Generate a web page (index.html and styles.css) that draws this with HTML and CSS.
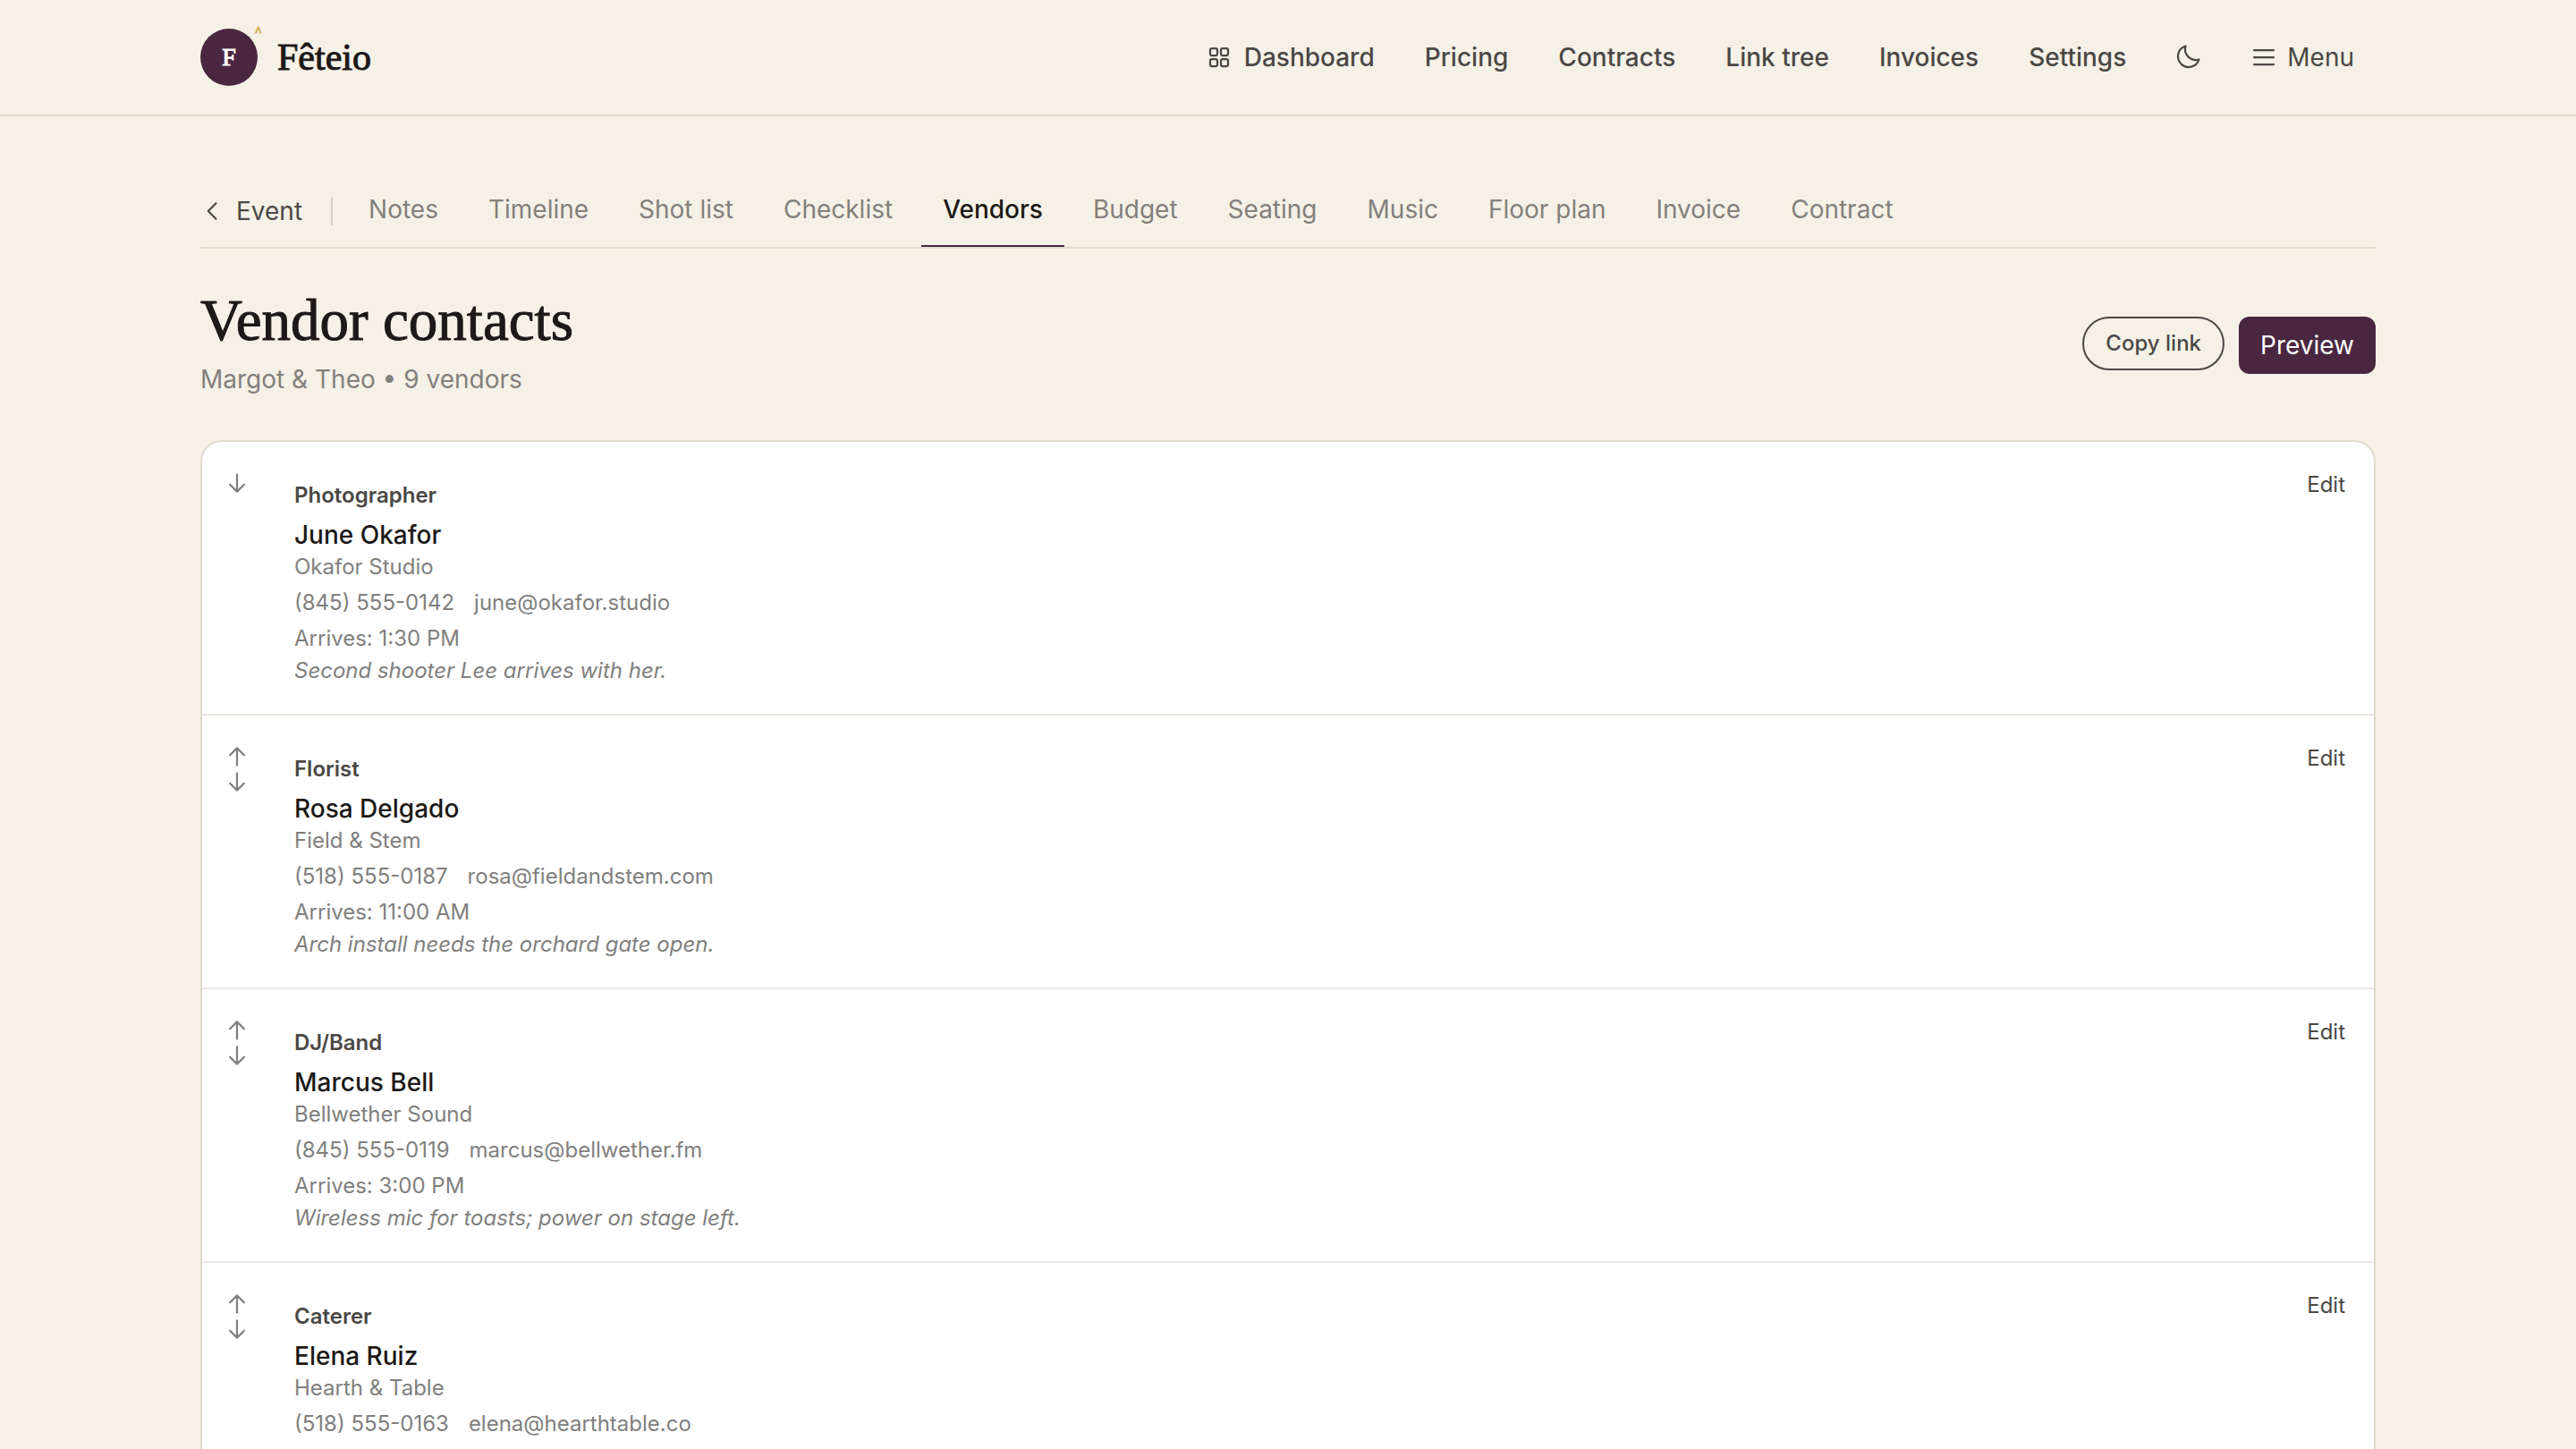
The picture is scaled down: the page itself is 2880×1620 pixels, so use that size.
FILE: index.html
```html
<!DOCTYPE html>
<html lang="en">
<head>
<meta charset="utf-8">
<meta name="viewport" content="width=device-width, initial-scale=1">
<title>Vendor contacts – Fêteio</title>
<link rel="stylesheet" href="styles.css">
</head>
<body>
<svg class="sprite" aria-hidden="true">
  <symbol id="grid" viewBox="0 0 256 256"><rect x="48" y="48" width="64" height="64" rx="16"/><rect x="144" y="48" width="64" height="64" rx="16"/><rect x="48" y="144" width="64" height="64" rx="16"/><rect x="144" y="144" width="64" height="64" rx="16"/></symbol>
  <symbol id="moon" viewBox="0 0 256 256"><path d="M108.11 28.11A96.09 96.09 0 0 0 227.89 147.89A96 96 0 1 1 108.11 28.11Z"/></symbol>
  <symbol id="list" viewBox="0 0 256 256"><path d="M40 64H216M40 128H216M40 192H216"/></symbol>
  <symbol id="caret" viewBox="0 0 256 256"><path d="M160 208L80 128L160 48"/></symbol>
  <symbol id="up" viewBox="0 0 256 256"><path d="M128 216V40M56 112L128 40L200 112"/></symbol>
  <symbol id="down" viewBox="0 0 256 256"><path d="M128 40V216M56 144L128 216L200 144"/></symbol>
</svg>

<header class="site-header">
  <div class="container site-bar">
    <a class="brand" href="#"><span class="mark">F<span class="mark-accent">^</span></span><span class="brand-name">Fêteio</span></a>
    <nav class="site-nav" aria-label="Main">
      <a href="#"><svg class="icon"><use href="#grid"/></svg>Dashboard</a>
      <a href="#">Pricing</a>
      <a href="#">Contracts</a>
      <a href="#">Link tree</a>
      <a href="#">Invoices</a>
      <a href="#">Settings</a>
      <button type="button" class="theme" aria-label="Dark mode"><svg class="icon"><use href="#moon"/></svg></button>
      <button type="button" class="menu"><svg class="icon"><use href="#list"/></svg>Menu</button>
    </nav>
  </div>
</header>

<main class="container">
  <nav class="tabs" aria-label="Event">
    <a class="back" href="#"><svg class="icon-small"><use href="#caret"/></svg>Event</a>
    <a class="tab" href="#">Notes</a>
    <a class="tab" href="#">Timeline</a>
    <a class="tab" href="#">Shot list</a>
    <a class="tab" href="#">Checklist</a>
    <a class="tab active" href="#" aria-current="page">Vendors</a>
    <a class="tab" href="#">Budget</a>
    <a class="tab" href="#">Seating</a>
    <a class="tab" href="#">Music</a>
    <a class="tab" href="#">Floor plan</a>
    <a class="tab" href="#">Invoice</a>
    <a class="tab" href="#">Contract</a>
  </nav>

  <div class="page-head">
    <div>
      <h1>Vendor contacts</h1>
      <p class="summary">Margot &amp; Theo • 9 vendors</p>
    </div>
    <div class="actions">
      <button type="button" class="copy">Copy link</button>
      <button type="button" class="preview">Preview</button>
    </div>
  </div>

  <ul class="vendors">
    <li class="vendor">
      <div class="order"><button type="button" aria-label="Move down"><svg class="icon-small"><use href="#down"/></svg></button></div>
      <div class="details">
        <p class="role">Photographer</p>
        <h2>June Okafor</h2>
        <p>Okafor Studio</p>
        <p class="contact"><a href="#">(845) 555-0142</a><a href="#">june@okafor.studio</a></p>
        <p class="arrival">Arrives: 1:30 PM</p>
        <p class="note">Second shooter Lee arrives with her.</p>
      </div>
      <button type="button" class="edit">Edit</button>
    </li>
    <li class="vendor">
      <div class="order"><button type="button" aria-label="Move up"><svg class="icon-small"><use href="#up"/></svg></button><button type="button" aria-label="Move down"><svg class="icon-small"><use href="#down"/></svg></button></div>
      <div class="details">
        <p class="role">Florist</p>
        <h2>Rosa Delgado</h2>
        <p>Field &amp; Stem</p>
        <p class="contact"><a href="#">(518) 555-0187</a><a href="#">rosa@fieldandstem.com</a></p>
        <p class="arrival">Arrives: 11:00 AM</p>
        <p class="note">Arch install needs the orchard gate open.</p>
      </div>
      <button type="button" class="edit">Edit</button>
    </li>
    <li class="vendor">
      <div class="order"><button type="button" aria-label="Move up"><svg class="icon-small"><use href="#up"/></svg></button><button type="button" aria-label="Move down"><svg class="icon-small"><use href="#down"/></svg></button></div>
      <div class="details">
        <p class="role">DJ/Band</p>
        <h2>Marcus Bell</h2>
        <p>Bellwether Sound</p>
        <p class="contact"><a href="#">(845) 555-0119</a><a href="#">marcus@bellwether.fm</a></p>
        <p class="arrival">Arrives: 3:00 PM</p>
        <p class="note">Wireless mic for toasts; power on stage left.</p>
      </div>
      <button type="button" class="edit">Edit</button>
    </li>
    <li class="vendor">
      <div class="order"><button type="button" aria-label="Move up"><svg class="icon-small"><use href="#up"/></svg></button><button type="button" aria-label="Move down"><svg class="icon-small"><use href="#down"/></svg></button></div>
      <div class="details">
        <p class="role">Caterer</p>
        <h2>Elena Ruiz</h2>
        <p>Hearth &amp; Table</p>
        <p class="contact"><a href="#">(518) 555-0163</a><a href="#">elena@hearthtable.co</a></p>
      </div>
      <button type="button" class="edit">Edit</button>
    </li>
  </ul>
</main>
</body>
</html>
```
FILE: styles.css
```css
:root {
  --cream: #f6f1e6;
  --line: #e0dccf;
  --ink: #1c1917;
  --text: #4a4845;
  --muted: #83807c;
  --plum: #4a2741;
}

* {
  box-sizing: border-box;
}

html {
  overflow-x: hidden;
  scrollbar-width: none;
}

body {
  margin: 0;
  background: var(--cream);
  color: var(--text);
  font: 400 28px/36px Inter, "Liberation Sans", sans-serif;
}

h1, h2, p, ul {
  margin: 0;
  padding: 0;
  font-weight: 400;
}

a {
  color: inherit;
  text-decoration: none;
}

button {
  display: flex;
  align-items: center;
  justify-content: center;
  margin: 0;
  padding: 0;
  border: 0;
  background: none;
  color: inherit;
  font: inherit;
  cursor: pointer;
}

.sprite {
  display: none;
}

.icon,
.icon-small {
  flex: none;
  width: 32px;
  height: 32px;
  fill: none;
  stroke: currentColor;
  stroke-width: 18;
  stroke-linecap: round;
  stroke-linejoin: round;
}

.icon-small {
  width: 28px;
  height: 28px;
  stroke-width: 20;
}

.container {
  width: calc(100% - 96px);
  max-width: 2432px;
  margin: 0 auto;
}

.site-header {
  border-bottom: 2px solid var(--line);
}

.site-bar {
  display: flex;
  align-items: center;
  justify-content: space-between;
  min-height: 128px;
}

.brand {
  display: flex;
  align-items: center;
  gap: 22px;
  color: var(--ink);
  font-family: "Liberation Serif", serif;
}

.mark {
  position: relative;
  display: flex;
  align-items: center;
  justify-content: center;
  width: 64px;
  height: 64px;
  border-radius: 50%;
  background: var(--plum);
  color: #fff;
  font-size: 28px;
  -webkit-text-stroke: 1px currentColor;
}

.mark-accent {
  position: absolute;
  top: -4px;
  right: -4px;
  color: #d4a548;
  font-size: 14px;
  line-height: 16px;
}

.brand-name {
  font-size: 42px;
  line-height: 52px;
  -webkit-text-stroke: 1px currentColor;
}

.site-nav {
  display: flex;
  align-items: center;
  gap: 56px;
  padding-right: 24px;
  font-weight: 500;
}

.site-nav a {
  display: flex;
  align-items: center;
  gap: 12px;
}

.theme {
  width: 26px;
}

.menu {
  gap: 10px;
  font-weight: 400;
}

.tabs {
  display: flex;
  align-items: flex-start;
  gap: 8px;
  margin-top: 80px;
  border-bottom: 2px solid var(--line);
  color: var(--muted);
}

.back {
  display: flex;
  align-items: center;
  gap: 12px;
  margin: 10px 8px 0 0;
  padding-right: 32px;
  border-right: 2px solid #d6d1c6;
  color: var(--text);
  line-height: 32px;
}

.tab {
  padding: 6px 24px 22px;
  border-bottom: 2px solid transparent;
}

.tab.active {
  border-color: var(--plum);
  color: var(--ink);
  font-weight: 500;
}

.page-head {
  display: flex;
  align-items: center;
  justify-content: space-between;
  margin: 48px 0 46px;
}

h1 {
  margin-bottom: 12px;
  color: var(--ink);
  font-family: "Liberation Serif", serif;
  font-size: 65px;
  line-height: 64px;
  -webkit-text-stroke: 1px currentColor;
}

.summary {
  color: var(--muted);
  line-height: 44px;
}

.actions {
  display: flex;
  align-items: flex-start;
  gap: 16px;
}

.copy {
  height: 60px;
  padding: 0 24px;
  border: 2px solid var(--text);
  border-radius: 30px;
  font-size: 24px;
  font-weight: 500;
}

.preview {
  height: 64px;
  padding: 0 24px;
  border-radius: 12px;
  background: var(--plum);
  color: #fff;
}

.vendors {
  overflow: hidden;
  border: 2px solid var(--line);
  border-radius: 24px;
  background: #fff;
  list-style: none;
}

.vendor {
  display: flex;
  align-items: flex-start;
  min-height: 306px;
  padding: 32px 32px 30px 25px;
  border-bottom: 2px solid #e9e7e1;
  color: #807f7e;
  font-size: 24px;
}

.order {
  display: flex;
  flex-direction: column;
  align-items: flex-start;
  width: 78px;
}

.details {
  flex: 1;
  padding-top: 10px;
}

.role {
  margin-bottom: 8px;
  color: var(--text);
  font-weight: 600;
}

h2 {
  color: var(--ink);
  font-size: 28px;
  font-weight: 500;
}

.contact {
  display: flex;
  gap: 22px;
  margin: 4px 0;
}

.note {
  font-style: italic;
}

.edit {
  height: 32px;
  color: var(--text);
}
```
